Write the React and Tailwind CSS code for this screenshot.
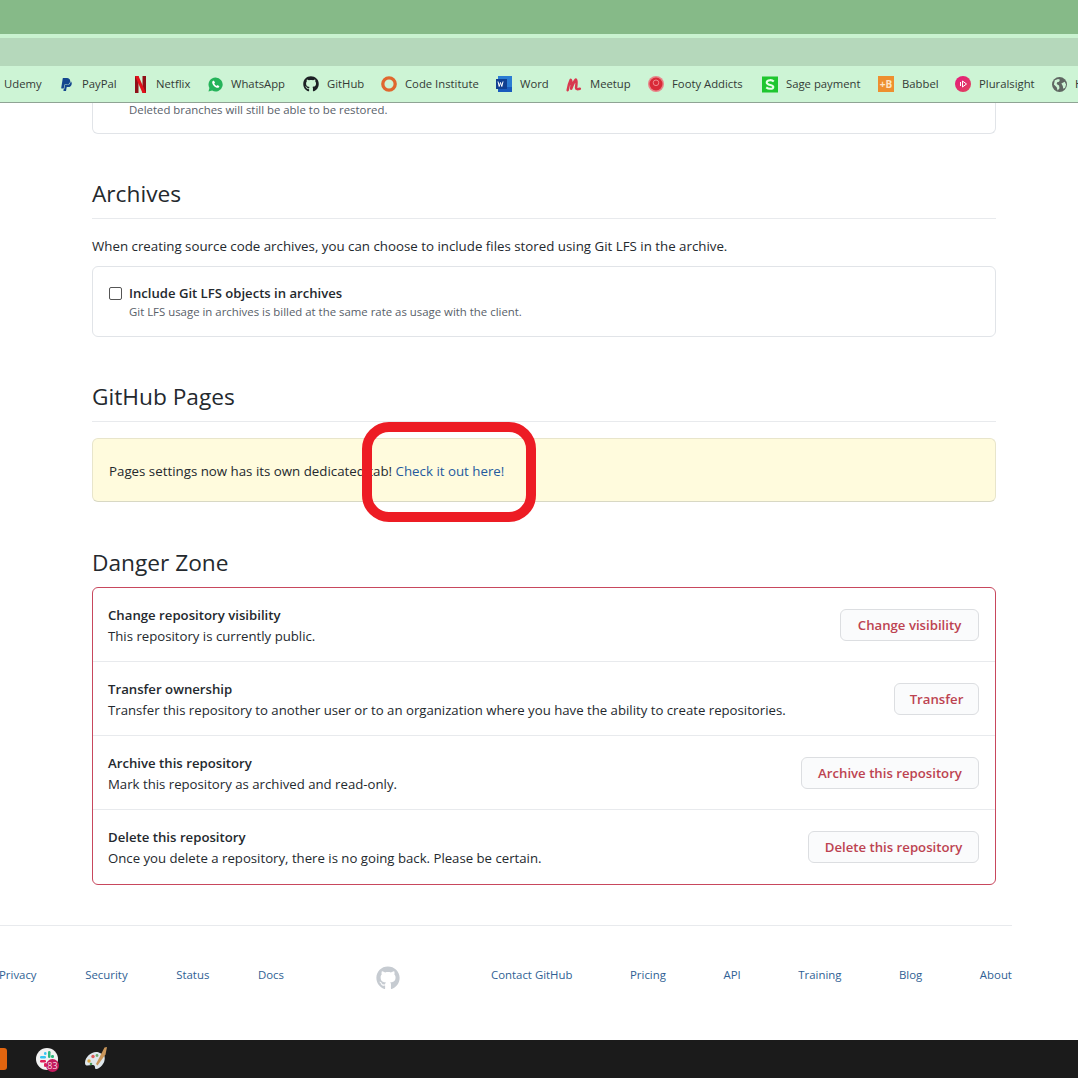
import React from "react";
import { FaGithub } from "react-icons/fa";
import { SiPaypal } from "react-icons/si";

const Word = () => (
  <svg width="16" height="16" viewBox="0 0 16 16">
    <rect x="2" y="0" width="14" height="16" fill="#2b7cd3" />
    <rect x="2" y="11" width="14" height="5" fill="#185abd" />
    <rect x="0" y="3" width="11" height="10" fill="#103f91" />
    <path d="M2 5.500l1.200 5 1.300-4 1.300 4 1.200-5" fill="none" stroke="#fff" strokeWidth="1" />
  </svg>
);
const Netflix = () => (
  <svg width="11" height="17" viewBox="0 0 11 17">
    <rect x="0" y="0" width="3.500" height="17" fill="#8f1018" />
    <rect x="7.500" y="0" width="3.500" height="17" fill="#8f1018" />
    <path d="M0 0h3.500L11 17H7.500z" fill="#e2101a" />
  </svg>
);
const WhatsApp = () => (
  <svg width="15" height="15" viewBox="0 0 16 16">
    <path d="M8 .5a7.500 7.500 0 0 0-6.500 11.200L.5 15.500l3.900-1A7.500 7.500 0 1 0 8 .5z" fill="#25b35a" />
    <path d="M5.400 4.100c-.8.600-1.100 1.500-.8 2.600.7 2.300 2.400 4 4.700 4.800 1.100.3 2-.1 2.600-.9.300-.4.200-.8-.1-1l-1.400-.8c-.3-.2-.6-.1-.8.100l-.5.600c-1.100-.5-2-1.400-2.500-2.500l.6-.5c.2-.2.300-.5.100-.8l-.8-1.500c-.2-.3-.5-.3-.9-.1z" fill="#fff" />
  </svg>
);
const Meetup = () => (
  <svg width="17" height="15" viewBox="0 0 17 15">
    <path d="M1.800 13.500C2.500 9.500 3.500 5.500 5 2.500c1.500 2 1 6 .5 9.500C7 8 8.500 4 10.500 2.200c1.500 2 .3 6.500.2 8.800 0 1.500 1.500 1.800 4 1" fill="none" stroke="#d8394f" strokeWidth="2.700" strokeLinecap="round" strokeLinejoin="round" />
  </svg>
);
const Ring = () => (
  <svg width="16" height="16" viewBox="0 0 16 16">
    <circle cx="8" cy="8" r="6.200" fill="none" stroke="#e0672e" strokeWidth="3.300" />
  </svg>
);
const Footy = () => (
  <svg width="16" height="16" viewBox="0 0 16 16">
    <circle cx="8" cy="8" r="8" fill="#e8848a" />
    <circle cx="8" cy="8" r="6.500" fill="#d92a38" />
    <circle cx="8" cy="6.800" r="2.800" fill="none" stroke="#f08a8f" strokeWidth="1" />
  </svg>
);
const Sage = () => (
  <svg width="17" height="17" viewBox="0 0 17 17">
    <rect width="17" height="17" fill="#1fc62f" />
    <path d="M12.500 5.200C11.500 4.200 9.800 3.800 8.300 3.900 6.400 4 5 5 5 6.500c0 3.400 7 1.800 7 4.600 0 1.300-1.500 2-3.300 2-1.500 0-3-.5-4.200-1.500" fill="none" stroke="#e8ffe8" strokeWidth="2.200" />
  </svg>
);
const Babbel = () => (
  <div className="flex h-[16px] w-[16px] items-center justify-center bg-[#ee8f2f] text-[10px] leading-none font-bold text-[#fde4c6]">+B</div>
);
const Plural = () => (
  <svg width="16" height="16" viewBox="0 0 16 16">
    <defs>
      <linearGradient id="pl" x1="0" y1="0" x2="1" y2="1">
        <stop offset="0" stopColor="#e5197d" />
        <stop offset="1" stopColor="#e0445c" />
      </linearGradient>
    </defs>
    <circle cx="8" cy="8" r="8" fill="url(#pl)" />
    <path d="M7.500 5v6l4-3z" fill="none" stroke="#fff" strokeWidth="1" />
    <path d="M5.500 6v4" stroke="#fff" strokeWidth="1" />
  </svg>
);
const Globe = () => (
  <svg width="15" height="15" viewBox="0 0 16 16">
    <circle cx="8" cy="8" r="8" fill="#5f6762" />
    <path d="M3 3.500l3.500-1.500 2 1-1 2-2 .5-.5 2 2.500 1.500.5 3-2 2.500-1-3.500-3-3zM10 7l3.500-2 1.500 3-1 3.500-2 1-.5-3z" fill="#cdf4d5" />
  </svg>
);

const bookmarks = [
  { label: "PayPal", w: "w-[33px]", icon: <SiPaypal size={13} color="#14468f" /> },
  { label: "Netflix", w: "w-[34px]", icon: <Netflix /> },
  { label: "WhatsApp", w: "w-[55px]", icon: <WhatsApp /> },
  { label: "GitHub", w: "w-[37px]", icon: <FaGithub size={16} color="#1c2024" /> },
  { label: "Code Institute", w: "w-[74px]", icon: <Ring /> },
  { label: "Word", w: "w-[29px]", icon: <Word /> },
  { label: "Meetup", w: "w-[41px]", icon: <Meetup /> },
  { label: "Footy Addicts", w: "w-[73px]", icon: <Footy /> },
  { label: "Sage payment", w: "w-[75px]", icon: <Sage /> },
  { label: "Babbel", w: "w-[36px]", icon: <Babbel /> },
  { label: "Pluralsight", w: "w-[55px]", icon: <Plural /> },
  { label: "H", w: "w-[40px]", icon: <Globe /> },
];

const dangers = [
  ["Change repository visibility", "This repository is currently public.", "Change visibility", "w-[139px]"],
  ["Transfer ownership", "Transfer this repository to another user or to an organization where you have the ability to create repositories.", "Transfer", "w-[85px]"],
  ["Archive this repository", "Mark this repository as archived and read-only.", "Archive this repository", "w-[178px]"],
  ["Delete this repository", "Once you delete a repository, there is no going back. Please be certain.", "Delete this repository", "w-[171px]"],
];

const Heading = ({ children, cls }) => (
  <div className={cls}>
    <h2 className="pt-[1px] text-[22.7px] leading-[30px] font-normal text-[#24292e]">{children}</h2>
  </div>
);

export default function App() {
  return (
    <div className="relative flex h-[1078px] w-[1078px] flex-col overflow-hidden bg-white font-['Open_Sans','Noto_Sans',sans-serif] text-[#24292e]">
      {/* browser chrome */}
      <div className="h-[34px] shrink-0 bg-[#86ba88]" />
      <div className="h-[4px] shrink-0 bg-[#c9f2d0]" />
      <div className="h-[28px] shrink-0 bg-[#b5d8bb]" />
      <div className="flex h-[37px] shrink-0 items-center gap-[17px] overflow-hidden border-b border-[#8fa394] bg-[#cdf4d5] pl-[4px] text-[11.3px] text-[#333a36]">
        <span className="w-[37px] shrink-0 whitespace-nowrap">Udemy</span>
        {bookmarks.map((b) => (
          <div key={b.label} className="flex shrink-0 items-center gap-[8px]">
            <span className="flex w-[16px] justify-center">{b.icon}</span>
            <span className={`${b.w} whitespace-nowrap`}>{b.label}</span>
          </div>
        ))}
      </div>

      {/* page */}
      <div className="flex-1 overflow-hidden">
        <div className="ml-[92px] w-[904px]">
          <div className="h-[31px] rounded-b-md border border-t-0 border-[#e1e4e8] pl-[36px] text-[11.4px] leading-[14px] text-[#586069]">
            Deleted branches will still be able to be restored.
          </div>

          <Heading cls="mt-[44px] border-b border-[#e8eaed] pb-[9px]">Archives</Heading>
          <p className="mt-[17px] text-[13.3px] leading-[20px]">
            When creating source code archives, you can choose to include files stored using Git LFS in the archive.
          </p>
          <div className="mt-[10px] h-[71px] rounded-md border border-[#e1e4e8] px-[16px] pt-[17px]">
            <div className="flex items-center gap-[7px]">
              <span className="h-[13px] w-[13px] shrink-0 rounded-[2px] border border-[#555] bg-white" />
              <span className="text-[13.1px] leading-[18px] font-semibold">Include Git LFS objects in archives</span>
            </div>
            <p className="mt-[2px] pl-[20px] text-[11.4px] leading-[16px] text-[#586069]">
              Git LFS usage in archives is billed at the same rate as usage with the client.
            </p>
          </div>

          <Heading cls="mt-[44px] border-b border-[#e8eaed] pb-[9px]">GitHub Pages</Heading>
          <div className="mt-[16px] flex h-[64px] items-center rounded-md border border-[#e8e5cb] border-b-[#d8d8c4] bg-[#fffbdd] pt-[3px] pr-[16px] pl-[16px] text-[13.3px]">
            <span>Pages settings now has its own dedicated tab!&nbsp;</span>
            <a className="text-[#245a9e]">Check it out here!</a>
          </div>

          <Heading cls="mt-[45px]">Danger Zone</Heading>
          <div className="mt-[9px] rounded-md border border-[#c8475d]">
            {dangers.map(([title, desc, btn, w], i) => (
              <div key={title} className={`flex h-[74px] items-center justify-between border-b pt-[1px] pr-[16px] pl-[15px] ${i < 3 ? "border-[#e8eaed]" : "border-transparent"}`}>
                <div className="pt-[2px] text-[13.2px] leading-[21px]">
                  <div className="font-semibold">{title}</div>
                  <div>{desc}</div>
                </div>
                <button className={`${w} h-[32px] rounded-md border border-[#dcdee1] bg-[#fafbfc] pt-[2px] text-[13.2px] font-semibold text-[#bd4351]`}>
                  {btn}
                </button>
              </div>
            ))}
          </div>
        </div>

        {/* footer */}
        <div className="mt-[40px] flex h-[80px] w-[1012px] items-start border-t border-[#e8eaed] pt-[39px] text-[11.4px] leading-[20px] text-[#2f5f94]">
          <div className="ml-[-1px] flex w-[285px] justify-between">
            <a>Privacy</a>
            <a>Security</a>
            <a>Status</a>
            <a>Docs</a>
          </div>
          <div className="mt-[1px] ml-[92px] shrink-0 text-[#c6cbd1]">
            <FaGithub size={24} />
          </div>
          <div className="ml-[91px] flex w-[521px] justify-between">
            <a>Contact GitHub</a>
            <a>Pricing</a>
            <a>API</a>
            <a>Training</a>
            <a>Blog</a>
            <a>About</a>
          </div>
        </div>
      </div>

      {/* taskbar */}
      <div className="flex h-[38px] shrink-0 items-center bg-[#1b1b1b]">
        <div className="h-[22px] w-[7px] rounded-r-[3px] bg-[#e2650f]" />
        <div className="relative ml-[29px] h-[22px] w-[22px] rounded-full bg-[#f2f2f2]">
          <svg width="22" height="22" viewBox="0 0 22 22">
            <rect x="4" y="8" width="6" height="2.500" rx="1.200" fill="#36c5f0" />
            <rect x="12" y="3" width="2.500" height="7" rx="1.200" fill="#2eb67d" />
            <rect x="4" y="12" width="6" height="2.500" rx="1.200" fill="#e01e5a" />
            <rect x="8" y="4" width="2.500" height="3" rx="1.200" fill="#36c5f0" />
            <rect x="8" y="15" width="2.500" height="4" rx="1.200" fill="#e01e5a" />
            <rect x="15" y="7" width="3" height="3" rx="1.200" fill="#2eb67d" />
          </svg>
          <span className="absolute right-[-1px] bottom-[-2px] flex h-[13px] w-[13px] items-center justify-center rounded-full bg-[#c2185b] text-[9px] leading-none text-[#f6d5e0]">83</span>
        </div>
        <svg className="ml-[26px]" width="24" height="24" viewBox="0 0 24 24">
          <path d="M1 16C1 10 7 5 12 5c2 0 3 .5 4 1l4 2c2 4 0 10-5 13-2 1.500-4 1.500-4-.5 0-2-1-2.500-3-2.500-3 0-7 2-7-2z" fill="#dfe7ec" />
          <path d="M23 0l-2.500.5L12 17l1.500 1.500 8-11z" fill="#c9965a" />
          <circle cx="5" cy="14" r="1.700" fill="#d9a441" />
          <circle cx="9" cy="9.500" r="1.700" fill="#dd5a5a" />
          <circle cx="13" cy="8.500" r="1.400" fill="#6fa86f" />
          <circle cx="7" cy="17" r="1.300" fill="#4f9a5f" />
        </svg>
      </div>

      {/* annotation */}
      <div className="absolute top-[422px] left-[362px] h-[100px] w-[174px] rounded-[27px] border-[10px] border-[#ed1c24]" />
    </div>
  );
}
